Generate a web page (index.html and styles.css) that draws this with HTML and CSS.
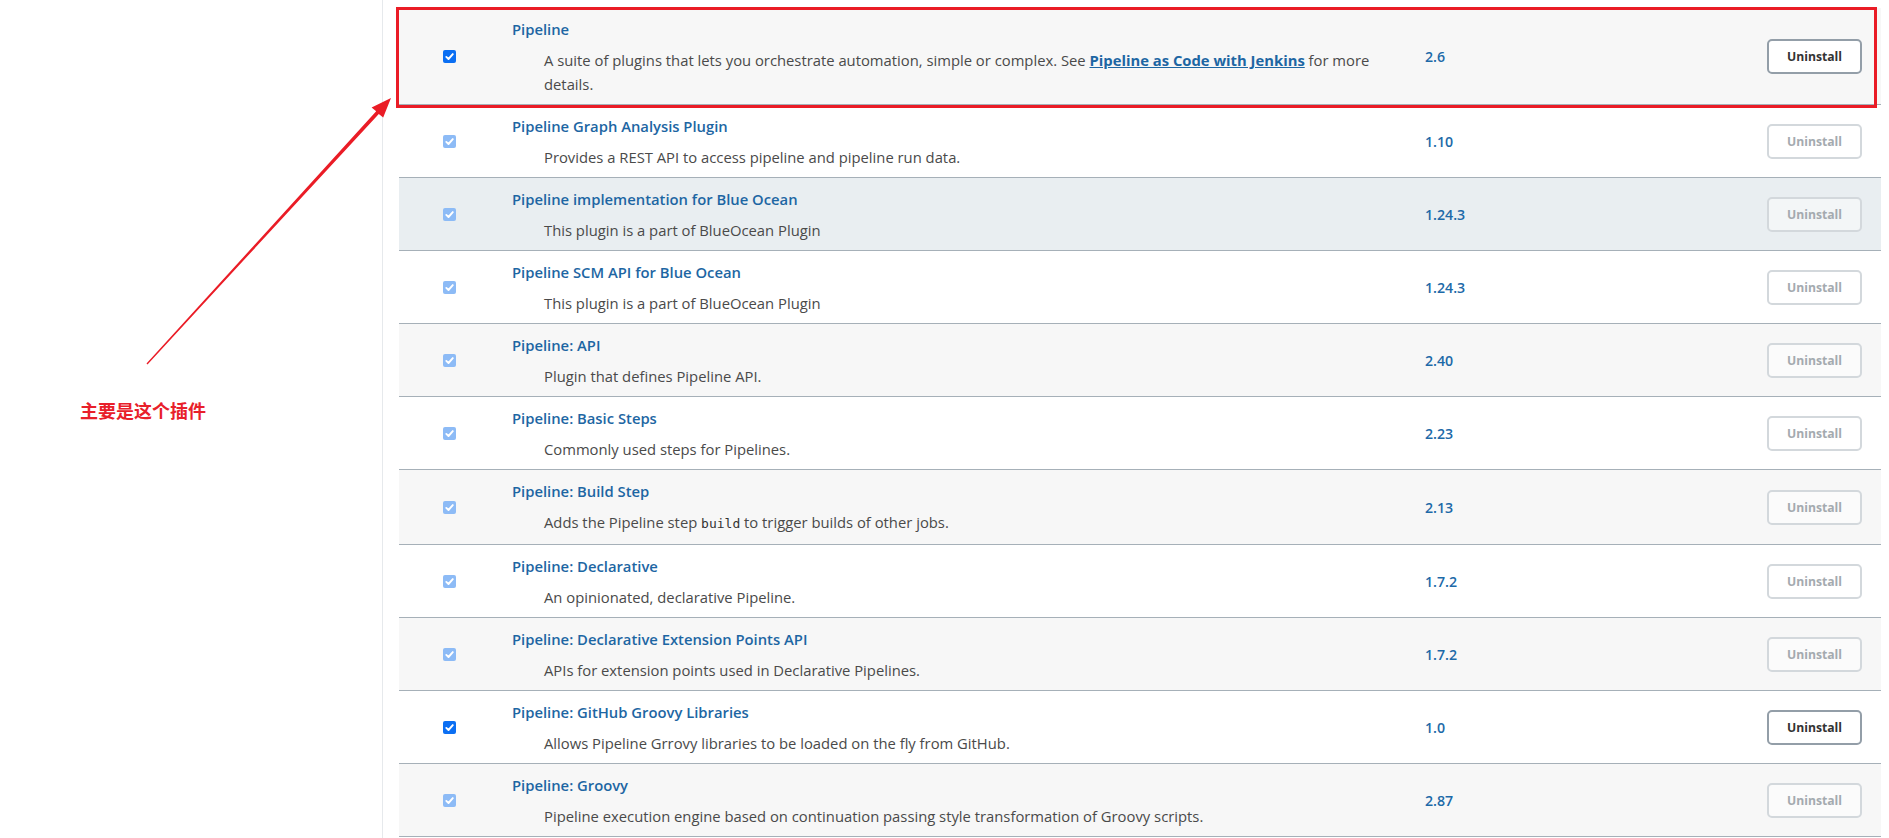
FILE: index.html
```html
<!DOCTYPE html>
<html>
<head>
<meta charset="utf-8">
<link rel="stylesheet" href="styles.css">
</head>
<body>
<div class="page">
  <aside class="side">
    <div class="note">主要是这个插件</div>
  </aside>
  <main class="main">
    <div class="plugins">
      <div class="row odd">
        <div class="c-cb"><span class="cb on"><svg viewBox="0 0 13 13"><path d="M3.3 6.9 L5.5 9 L9.8 4.1"/></svg></span></div>
        <div class="c-name">
          <a class="title">Pipeline</a>
          <div class="desc">A suite of plugins that lets you orchestrate automation, simple or complex. See <a class="lnk">Pipeline as Code with Jenkins</a> for more details.</div>
        </div>
        <div class="c-ver"><a class="ver">2.6</a></div>
        <div class="c-act"><button class="btn on">Uninstall</button></div>
      </div>
      <div class="row">
        <div class="c-cb"><span class="cb"><svg viewBox="0 0 13 13"><path d="M3.3 6.9 L5.5 9 L9.8 4.1"/></svg></span></div>
        <div class="c-name">
          <a class="title">Pipeline Graph Analysis Plugin</a>
          <div class="desc">Provides a REST API to access pipeline and pipeline run data.</div>
        </div>
        <div class="c-ver"><a class="ver">1.10</a></div>
        <div class="c-act"><button class="btn">Uninstall</button></div>
      </div>
      <div class="row hover">
        <div class="c-cb"><span class="cb"><svg viewBox="0 0 13 13"><path d="M3.3 6.9 L5.5 9 L9.8 4.1"/></svg></span></div>
        <div class="c-name">
          <a class="title">Pipeline implementation for Blue Ocean</a>
          <div class="desc">This plugin is a part of BlueOcean Plugin</div>
        </div>
        <div class="c-ver"><a class="ver">1.24.3</a></div>
        <div class="c-act"><button class="btn">Uninstall</button></div>
      </div>
      <div class="row">
        <div class="c-cb"><span class="cb"><svg viewBox="0 0 13 13"><path d="M3.3 6.9 L5.5 9 L9.8 4.1"/></svg></span></div>
        <div class="c-name">
          <a class="title">Pipeline SCM API for Blue Ocean</a>
          <div class="desc">This plugin is a part of BlueOcean Plugin</div>
        </div>
        <div class="c-ver"><a class="ver">1.24.3</a></div>
        <div class="c-act"><button class="btn">Uninstall</button></div>
      </div>
      <div class="row odd">
        <div class="c-cb"><span class="cb"><svg viewBox="0 0 13 13"><path d="M3.3 6.9 L5.5 9 L9.8 4.1"/></svg></span></div>
        <div class="c-name">
          <a class="title">Pipeline: API</a>
          <div class="desc">Plugin that defines Pipeline API.</div>
        </div>
        <div class="c-ver"><a class="ver">2.40</a></div>
        <div class="c-act"><button class="btn">Uninstall</button></div>
      </div>
      <div class="row">
        <div class="c-cb"><span class="cb"><svg viewBox="0 0 13 13"><path d="M3.3 6.9 L5.5 9 L9.8 4.1"/></svg></span></div>
        <div class="c-name">
          <a class="title">Pipeline: Basic Steps</a>
          <div class="desc">Commonly used steps for Pipelines.</div>
        </div>
        <div class="c-ver"><a class="ver">2.23</a></div>
        <div class="c-act"><button class="btn">Uninstall</button></div>
      </div>
      <div class="row odd">
        <div class="c-cb"><span class="cb"><svg viewBox="0 0 13 13"><path d="M3.3 6.9 L5.5 9 L9.8 4.1"/></svg></span></div>
        <div class="c-name">
          <a class="title">Pipeline: Build Step</a>
          <div class="desc">Adds the Pipeline step <code>build</code> to trigger builds of other jobs.</div>
        </div>
        <div class="c-ver"><a class="ver">2.13</a></div>
        <div class="c-act"><button class="btn">Uninstall</button></div>
      </div>
      <div class="row">
        <div class="c-cb"><span class="cb"><svg viewBox="0 0 13 13"><path d="M3.3 6.9 L5.5 9 L9.8 4.1"/></svg></span></div>
        <div class="c-name">
          <a class="title">Pipeline: Declarative</a>
          <div class="desc">An opinionated, declarative Pipeline.</div>
        </div>
        <div class="c-ver"><a class="ver">1.7.2</a></div>
        <div class="c-act"><button class="btn">Uninstall</button></div>
      </div>
      <div class="row odd">
        <div class="c-cb"><span class="cb"><svg viewBox="0 0 13 13"><path d="M3.3 6.9 L5.5 9 L9.8 4.1"/></svg></span></div>
        <div class="c-name">
          <a class="title">Pipeline: Declarative Extension Points API</a>
          <div class="desc">APIs for extension points used in Declarative Pipelines.</div>
        </div>
        <div class="c-ver"><a class="ver">1.7.2</a></div>
        <div class="c-act"><button class="btn">Uninstall</button></div>
      </div>
      <div class="row">
        <div class="c-cb"><span class="cb on"><svg viewBox="0 0 13 13"><path d="M3.3 6.9 L5.5 9 L9.8 4.1"/></svg></span></div>
        <div class="c-name">
          <a class="title">Pipeline: GitHub Groovy Libraries</a>
          <div class="desc">Allows Pipeline Grrovy libraries to be loaded on the fly from GitHub.</div>
        </div>
        <div class="c-ver"><a class="ver">1.0</a></div>
        <div class="c-act"><button class="btn on">Uninstall</button></div>
      </div>
      <div class="row odd">
        <div class="c-cb"><span class="cb"><svg viewBox="0 0 13 13"><path d="M3.3 6.9 L5.5 9 L9.8 4.1"/></svg></span></div>
        <div class="c-name">
          <a class="title">Pipeline: Groovy</a>
          <div class="desc">Pipeline execution engine based on continuation passing style transformation of Groovy scripts.</div>
        </div>
        <div class="c-ver"><a class="ver">2.87</a></div>
        <div class="c-act"><button class="btn">Uninstall</button></div>
      </div>
    </div>
  </main>
</div>
<div class="hl-box"></div>
<svg class="arrow" width="1889" height="838" viewBox="0 0 1889 838">
  <polygon points="146.5,363.6 376.2,111.2 371.6,107.4 391,98 383.2,117.6 378.8,113.9 147.5,364.4"/>
</svg>
</body>
</html>
```
FILE: styles.css
```css
html, body {
  margin: 0;
  padding: 0;
  overflow: hidden;
  background: #fff;
}
body {
  font-family: "Open Sans", "Noto Sans", sans-serif;
  color: #4a4a4a;
  width: 1889px;
  height: 838px;
  position: relative;
}
.page {
  display: flex;
  height: 838px;
}
.side {
  width: 382px;
  flex: none;
  border-right: 1px solid #e6e9ec;
  position: relative;
}
.note {
  position: absolute;
  left: 80px;
  top: 397px;
  font-family: "Noto Sans CJK SC", sans-serif;
  font-weight: 700;
  font-size: 18px;
  line-height: 26px;
  color: #e8202a;
}
.main {
  flex: 1;
  padding: 8px 8px 0 16px;
}
.plugins {
  width: 1482px;
}
.row {
  display: grid;
  grid-template-columns: 100px 1fr 338px 133px;
  border-bottom: 1px solid #a6b0b8;
  background: #fff;
}
.row.odd { background: #f7f7f7; }
.row.hover { background: #e9eef1; }
.c-cb {
  display: flex;
  align-items: center;
  justify-content: center;
}
.cb {
  width: 13px;
  height: 13px;
  border-radius: 2px;
  background: #8dbbf6;
  display: block;
}
.cb.on { background: #0b6ff3; }
.cb svg {
  width: 13px;
  height: 13px;
  display: block;
}
.cb path {
  fill: none;
  stroke: #fff;
  stroke-width: 1.9;
  stroke-linecap: round;
  stroke-linejoin: round;
}
.c-name {
  padding: 11px 13px 8px 13px;
}
.title {
  display: block;
  font-size: 14.8px;
  font-weight: 600;
  line-height: 20px;
  color: #1d66a3;
}
.desc {
  margin: 9px 0 0 32px;
  font-size: 14.8px;
  line-height: 24px;
  color: #4a4a4a;
}
.desc code {
  font-family: "DejaVu Sans Mono", "Liberation Mono", monospace;
  font-size: 13px;
  color: #333;
}
.lnk {
  font-weight: 700;
  color: #1d66a3;
  text-decoration: underline;
}
.c-ver {
  display: flex;
  align-items: center;
  padding-left: 15px;
}
.ver {
  font-size: 14.2px;
  font-weight: 600;
  color: #1d6aa8;
}
.c-act {
  display: flex;
  align-items: center;
  justify-content: flex-end;
  padding-right: 19px;
}
.btn {
  width: 95px;
  height: 35px;
  box-sizing: border-box;
  border: 2px solid #d3d8dc;
  border-radius: 5px;
  background: rgba(255, 255, 255, 0.45);
  font-family: "Open Sans", "Noto Sans", sans-serif;
  font-size: 12.2px;
  font-weight: 700;
  color: #a4aaaf;
  padding: 0;
}
.btn.on {
  border-color: #939ea8;
  background: #fff;
  color: #333;
}
.hl-box {
  position: absolute;
  left: 396px;
  top: 7px;
  width: 1481px;
  height: 101px;
  box-sizing: border-box;
  border: 3px solid #ea1c26;
  pointer-events: none;
}
.arrow {
  position: absolute;
  left: 0;
  top: 0;
  pointer-events: none;
}
.arrow polygon {
  fill: #ea1c26;
}
```
